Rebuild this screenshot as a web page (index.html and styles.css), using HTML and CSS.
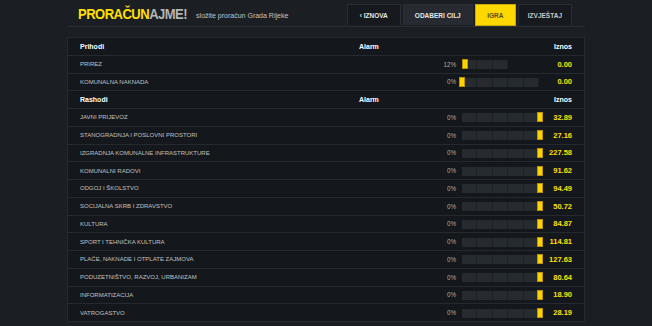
FILE: index.html
```html
<!DOCTYPE html>
<html lang="hr">
<head>
  <meta charset="UTF-8">
  <title>Proračunajme!</title>
  <link rel="stylesheet" href="styles.css">
</head>
<body>

<div class="wrap">

  <div class="header">
    <div class="logo"><span class="logo-hi">PRORAČUN</span>AJME!</div>
    <div class="tagline">složite proračun Grada Rijeke</div>
    <div class="tabs">
      <a href="#" class="tab tab-back">&lsaquo; IZNOVA</a>
      <a href="#" class="tab tab-goal">ODABERI CILJ</a>
      <a href="#" class="tab tab-active">IGRA</a>
      <a href="#" class="tab">IZVJEŠTAJ</a>
    </div>
  </div>

  <div class="budget">
    <div class="row row-head">
      <div>Prihodi</div>
      <div class="alarm">Alarm</div>
      <div></div>
      <div class="value">Iznos</div>
    </div>
    <div class="row">
      <div class="label">PRIREZ</div>
      <div class="pct">12%</div>
      <div class="bar"><div class="track" style="width:46px"></div><div class="mark" style="left:3px"></div></div>
      <div class="value">0.00</div>
    </div>
    <div class="row">
      <div class="label">KOMUNALNA NAKNADA</div>
      <div class="pct">0%</div>
      <div class="bar"><div class="track"></div><div class="mark" style="left:0px"></div></div>
      <div class="value">0.00</div>
    </div>

    <div class="row row-head">
      <div>Rashodi</div>
      <div class="alarm">Alarm</div>
      <div></div>
      <div class="value">Iznos</div>
    </div>
    <div class="row">
      <div class="label">JAVNI PRIJEVOZ</div>
      <div class="pct">0%</div>
      <div class="bar"><div class="track"></div><div class="mark mark-end"></div></div>
      <div class="value">32.89</div>
    </div>
    <div class="row">
      <div class="label">STANOGRADNJA I POSLOVNI PROSTORI</div>
      <div class="pct">0%</div>
      <div class="bar"><div class="track"></div><div class="mark mark-end"></div></div>
      <div class="value">27.16</div>
    </div>
    <div class="row">
      <div class="label">IZGRADNJA KOMUNALNE INFRASTRUKTURE</div>
      <div class="pct">0%</div>
      <div class="bar"><div class="track"></div><div class="mark mark-end"></div></div>
      <div class="value">227.58</div>
    </div>
    <div class="row">
      <div class="label">KOMUNALNI RADOVI</div>
      <div class="pct">0%</div>
      <div class="bar"><div class="track"></div><div class="mark mark-end"></div></div>
      <div class="value">91.62</div>
    </div>
    <div class="row">
      <div class="label">ODGOJ I ŠKOLSTVO</div>
      <div class="pct">0%</div>
      <div class="bar"><div class="track"></div><div class="mark mark-end"></div></div>
      <div class="value">94.49</div>
    </div>
    <div class="row">
      <div class="label">SOCIJALNA SKRB I ZDRAVSTVO</div>
      <div class="pct">0%</div>
      <div class="bar"><div class="track"></div><div class="mark mark-end"></div></div>
      <div class="value">50.72</div>
    </div>
    <div class="row">
      <div class="label">KULTURA</div>
      <div class="pct">0%</div>
      <div class="bar"><div class="track"></div><div class="mark mark-end"></div></div>
      <div class="value">84.87</div>
    </div>
    <div class="row">
      <div class="label">SPORT I TEHNIČKA KULTURA</div>
      <div class="pct">0%</div>
      <div class="bar"><div class="track"></div><div class="mark mark-end"></div></div>
      <div class="value">114.81</div>
    </div>
    <div class="row">
      <div class="label">PLAĆE, NAKNADE I OTPLATE ZAJMOVA</div>
      <div class="pct">0%</div>
      <div class="bar"><div class="track"></div><div class="mark mark-end"></div></div>
      <div class="value">127.63</div>
    </div>
    <div class="row">
      <div class="label">PODUZETNIŠTVO, RAZVOJ, URBANIZAM</div>
      <div class="pct">0%</div>
      <div class="bar"><div class="track"></div><div class="mark mark-end"></div></div>
      <div class="value">80.64</div>
    </div>
    <div class="row">
      <div class="label">INFORMATIZACIJA</div>
      <div class="pct">0%</div>
      <div class="bar"><div class="track"></div><div class="mark mark-end"></div></div>
      <div class="value">18.90</div>
    </div>
    <div class="row">
      <div class="label">VATROGASTVO</div>
      <div class="pct">0%</div>
      <div class="bar"><div class="track"></div><div class="mark mark-end"></div></div>
      <div class="value">28.19</div>
    </div>
  </div>

</div>

</body>
</html>
```

FILE: styles.css
```css
body {
  margin: 0;
  background: #1b1e23;
  font-family: "Liberation Sans", Arial, sans-serif;
  color: #b9b9b9;
}
.wrap {
  width: 518px;
  margin: 0 auto;
}
.header {
  display: flex;
  align-items: flex-end;
  height: 26px;
  padding: 0 13px 0 11px;
  border-bottom: 1px solid #2a2e34;
}
.logo {
  align-self: center;
  font-size: 13px;
  font-weight: bold;
  letter-spacing: -0.5px;
  color: #b4b4b4;
  margin-top: 1px;
  transform: scaleY(1.18);
}
.logo-hi {
  color: #ffe000;
}
.tagline {
  align-self: center;
  font-size: 7px;
  color: #c4c4c4;
  margin: 4px 0 0 9px;
}
.tabs {
  display: flex;
  margin-left: auto;
  gap: 2px;
}
.tab {
  display: flex;
  align-items: center;
  justify-content: center;
  height: 20px;
  padding: 0 9px;
  border: 1px solid #2a2e34;
  border-bottom: none;
  color: #c8c8c8;
  text-decoration: none;
  font-size: 6.5px;
  font-weight: bold;
  background: #16191d;
}
.tab-back {
  width: 34px;
  color: #e8e8e8;
}
.tab-goal {
  width: 50px;
  background: #272b31;
  color: #e8e8e8;
}
.tab-active {
  width: 21px;
  background: #ffd800;
  border: 1px solid #c9a800;
  color: #5a4a00;
  height: 20px;
}
.budget {
  margin-top: 10px;
  border: 1px solid #262a2f;
  background: #14171b;
}
.row {
  display: grid;
  grid-template-columns: 1fr 100px 86px 27px;
  align-items: center;
  height: 16.75px;
  padding: 0 12px;
  border-top: 1px solid #262a2f;
  font-size: 6.3px;
}
.row:first-child {
  border-top: none;
}
.row-head {
  font-weight: bold;
  color: #ffffff;
  font-size: 7px;
}
.label {
  color: #c2c2c2;
  font-size: 6px;
}
.pct {
  text-align: right;
  padding-right: 3px;
  color: #a9a9a9;
}
.alarm {
  text-align: left;
}
.value {
  text-align: right;
  font-weight: bold;
  color: #ffe000;
  font-size: 7.5px;
}
.row-head .value {
  color: #ffffff;
  font-size: 7px;
}
.bar {
  position: relative;
  height: 10px;
}
.track {
  position: absolute;
  left: 3px;
  top: 1px;
  width: 77px;
  height: 9px;
  background: repeating-linear-gradient(90deg, #262b30 0, #262b30 14.4px, #1c1f23 14.4px, #1c1f23 15.4px);
}
.mark {
  position: absolute;
  top: 0;
  width: 4px;
  height: 8px;
  background: #ffd200;
  border: 1px solid #b89500;
}
.mark-end {
  left: 78px;
}
```
